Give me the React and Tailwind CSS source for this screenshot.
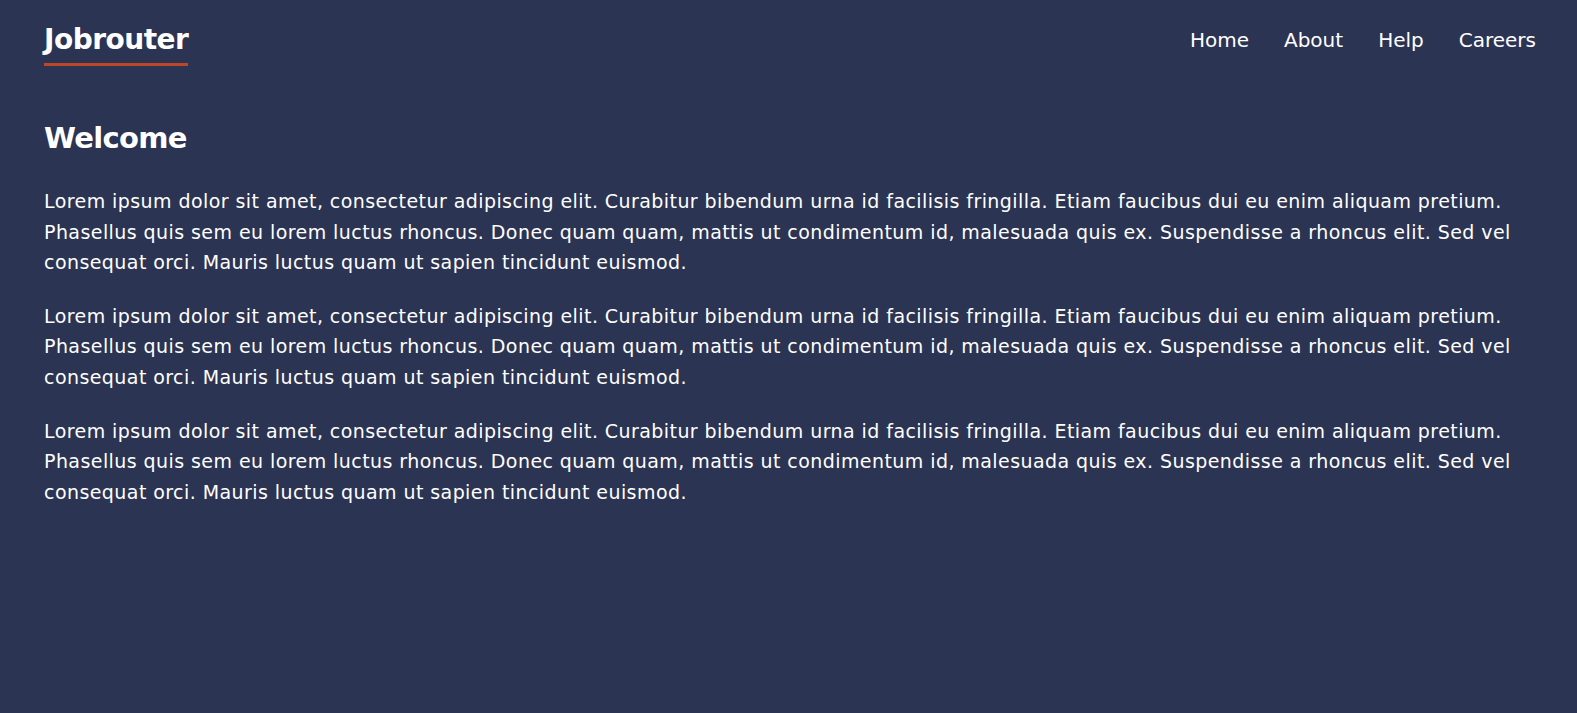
const LOREM =
  "Lorem ipsum dolor sit amet, consectetur adipiscing elit. Curabitur bibendum urna id facilisis fringilla. Etiam faucibus dui eu enim aliquam pretium. Phasellus quis sem eu lorem luctus rhoncus. Donec quam quam, mattis ut condimentum id, malesuada quis ex. Suspendisse a rhoncus elit. Sed vel consequat orci. Mauris luctus quam ut sapien tincidunt euismod.";

const links = ["Home", "About", "Help", "Careers"];

export default function App() {
  return (
    <div className="min-h-screen bg-[#2c3453] text-white font-['DejaVu_Sans',sans-serif]">
      <header className="flex items-start justify-between pl-[44px] pr-[41px] pt-[26px]">
        <a href="#" className="flex flex-col">
          <span className="text-[28px] font-bold leading-none tracking-[-0.5px]">Jobrouter</span>
          <span className="mt-[9px] h-[3px] w-full bg-[#c0462a]" />
        </a>
        <nav className="flex gap-[35px] text-[20px] leading-[28px]">
          {links.map((l) => (
            <a key={l} href="#" className="hover:text-[#c0462a]">
              {l}
            </a>
          ))}
        </nav>
      </header>

      <main className="px-[44px] pt-[58px]">
        <h1 className="text-[29px] font-bold leading-none tracking-[-0.7px]">Welcome</h1>
        <div className="mt-[33px]">
          {[0, 1, 2].map((i) => (
            <p key={i} className="mb-[23px] text-[19px] leading-[30.6px] tracking-[0.43px]">
              {LOREM}
            </p>
          ))}
        </div>
      </main>
    </div>
  );
}
